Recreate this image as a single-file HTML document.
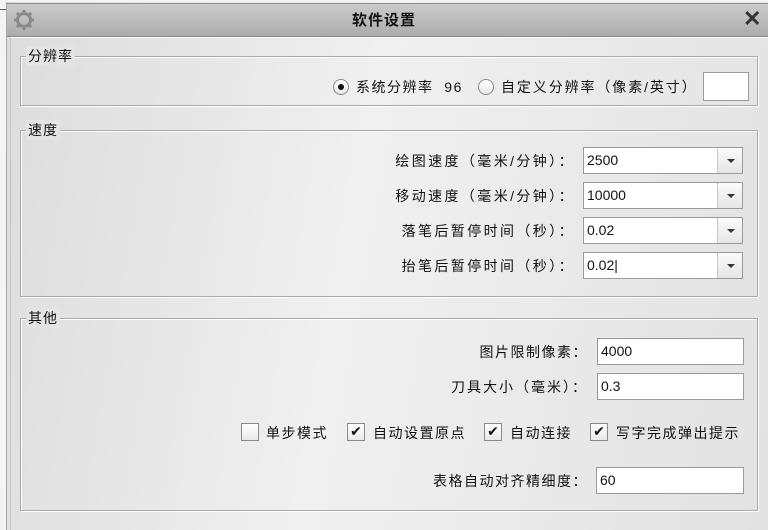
<!DOCTYPE html>
<html><head><meta charset="utf-8"><style>
*{margin:0;padding:0;box-sizing:border-box}
body{width:768px;height:530px;overflow:hidden;background:#f4f4f4;font-family:"Liberation Sans","Noto Sans CJK SC",sans-serif;font-size:14px;color:#111;position:relative}
.a{position:absolute}
#win{left:6px;top:2px;right:0;bottom:0;border-left:1px solid #a8a8a8;background:linear-gradient(100deg,#dcdcdc 0%,#f0f0f0 45%,#e2e2e2 100%)}
#title{left:7px;top:3px;right:0;height:34px;background:linear-gradient(#cbcbcb,#acacac);border-top:1px solid #909090;border-bottom:1px solid #8a8a8a}
#inner{left:10px;top:37px;right:0;bottom:0;border-left:1px solid #c4c4c4;border-top:1px solid #fff}
.grp{position:absolute;left:20px;width:738px;border:1px solid #a9a9a9;box-shadow:inset 1px 1px 0 #fff,1px 1px 0 #fff}
.lg{position:absolute;top:-11px;left:5px;padding:0 2px;background:#e4e4e4;font-size:14px;letter-spacing:1px}
.inp{position:absolute;background:#fff;border:1px solid #9a9a9a;height:27px;line-height:25px;padding-left:3px;font-size:14px}
.cb{position:absolute;width:160px;height:27px;border:1px solid #9a9a9a;background:#fff;line-height:25px;padding-left:3px}
.cb i{position:absolute;right:0;top:0;width:25px;height:25px;border-left:1px solid #c8c8c8;background:linear-gradient(#fbfbfb,#e6e6e6)}
.cb i:after{content:"";position:absolute;left:9px;top:11px;border-left:4px solid transparent;border-right:4px solid transparent;border-top:4px solid #333}
.lb{position:absolute;text-align:right;white-space:nowrap;letter-spacing:1.5px}
.rd{position:absolute;width:16px;height:16px;border-radius:50%;border:1px solid #8a8a8a;background:linear-gradient(#fff,#e8e8e8)}
.ck{position:absolute;width:18px;height:18px;border:1px solid #8a8a8a;background:linear-gradient(#fff,#eaeaea);font-size:14px;line-height:17px;text-align:center;font-family:"DejaVu Sans",sans-serif}
</style></head><body>
<div class="a" style="left:0;top:9px;width:6px;border-top:1px solid #555"></div>
<div id="win" class="a"></div>
<div id="title" class="a"></div>
<svg class="a" style="left:12px;top:8px" width="24" height="24" viewBox="0 0 24 24"><g fill="none" stroke="#8a8a8a" stroke-width="3"><circle cx="12" cy="12" r="6.5"/><path d="M12 2v4M12 18v4M2 12h4M18 12h4M4.9 4.9l2.8 2.8M16.3 16.3l2.8 2.8M4.9 19.1l2.8-2.8M16.3 7.7l2.8-2.8"/></g></svg>
<div class="a" style="left:0;width:768px;top:9px;text-align:center;font-weight:bold;font-size:15px;letter-spacing:1px">软件设置</div>
<div class="a" style="left:743px;top:6px;font-size:22px;font-weight:bold;color:#333">✕</div>
<div id="inner" class="a"></div>

<div class="grp" style="top:56px;height:50px"><span class="lg">分辨率</span></div>
<div class="rd" style="left:333px;top:79px"><div style="position:absolute;left:4px;top:4px;width:6px;height:6px;border-radius:50%;background:#111"></div></div>
<div class="lb" style="left:356px;top:77px">系统分辨率&nbsp; 96</div>
<div class="rd" style="left:478px;top:79px"></div>
<div class="lb" style="left:501px;top:77px;letter-spacing:1.9px">自定义分辨率（像素/英寸）</div>
<div class="inp" style="left:703px;top:72px;width:46px;height:29px"></div>

<div class="grp" style="top:130px;height:167px"><span class="lg">速度</span></div>
<div class="lb" style="right:193px;top:151px;letter-spacing:2.4px">绘图速度（毫米/分钟）：</div>
<div class="cb" style="left:583px;top:147px">2500<i></i></div>
<div class="lb" style="right:193px;top:186px;letter-spacing:2.4px">移动速度（毫米/分钟）：</div>
<div class="cb" style="left:583px;top:182px">10000<i></i></div>
<div class="lb" style="right:193px;top:221px;letter-spacing:2.4px">落笔后暂停时间（秒）：</div>
<div class="cb" style="left:583px;top:217px">0.02<i></i></div>
<div class="lb" style="right:193px;top:256px;letter-spacing:2.4px">抬笔后暂停时间（秒）：</div>
<div class="cb" style="left:583px;top:252px">0.02|<i></i></div>

<div class="grp" style="top:318px;height:193px"><span class="lg">其他</span></div>
<div class="lb" style="right:180px;top:342px">图片限制像素：</div>
<div class="inp" style="left:597px;top:338px;width:147px">4000</div>
<div class="lb" style="right:180px;top:377px;letter-spacing:2px">刀具大小（毫米）：</div>
<div class="inp" style="left:597px;top:373px;width:147px">0.3</div>
<div class="ck" style="left:241px;top:423px"></div><div class="lb" style="left:266px;top:423px">单步模式</div>
<div class="ck" style="left:347px;top:423px">✔</div><div class="lb" style="left:373px;top:423px">自动设置原点</div>
<div class="ck" style="left:484px;top:423px">✔</div><div class="lb" style="left:510px;top:423px">自动连接</div>
<div class="ck" style="left:590px;top:423px">✔</div><div class="lb" style="left:616px;top:423px">写字完成弹出提示</div>
<div class="lb" style="right:180px;top:471px">表格自动对齐精细度：</div>
<div class="inp" style="left:596px;top:467px;width:148px">60</div>
</body></html>
